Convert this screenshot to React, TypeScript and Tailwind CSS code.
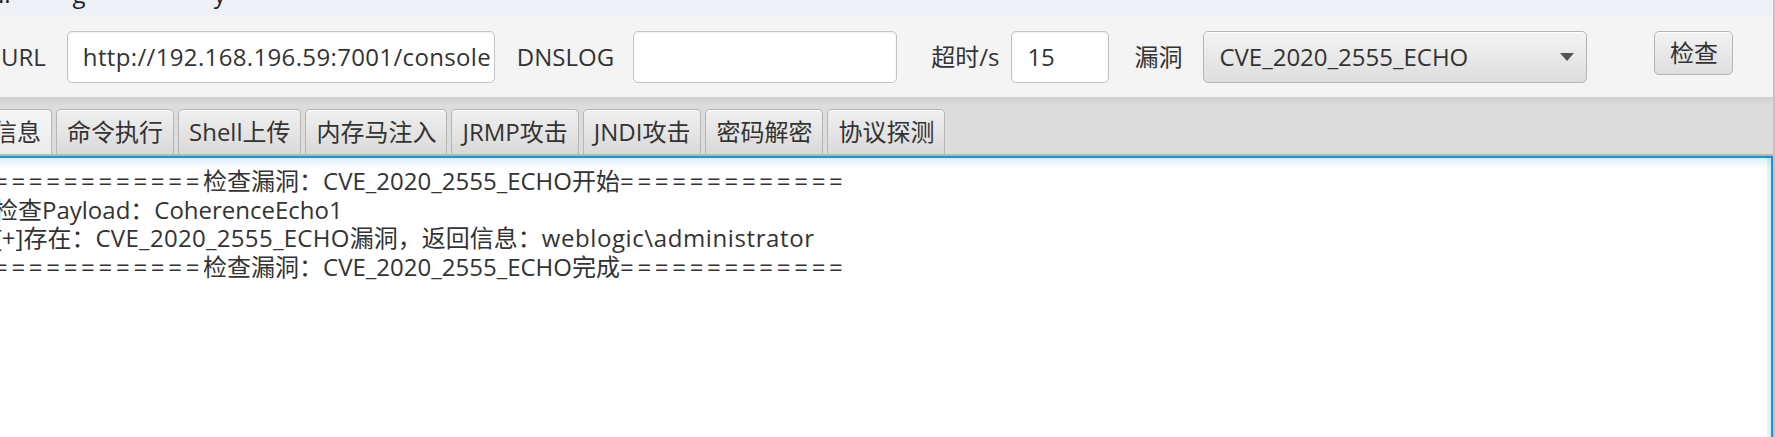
import React from "react";

const font = "font-['Open_Sans','Noto_Sans_CJK_SC',sans-serif]";

const tabs = ["基本信息", "命令执行", "Shell上传", "内存马注入", "JRMP攻击", "JNDI攻击", "密码解密", "协议探测"];

function Eq({ n }: { n: number }) {
  return <span className="tracking-[3.7px]">{"=".repeat(n)}</span>;
}

export default function App() {
  return (
    <div className={`w-[1775px] h-[437px] overflow-hidden bg-white text-[#333333] ${font}`}>
      <div className="w-[1775px] h-[437px] overflow-hidden flex flex-col border-r-2 border-[#c4c4c4]">
        {/* title strip */}
        <div className="h-[15px] shrink-0 bg-[#eef2f8] overflow-hidden">
          <div className="text-[24px] leading-[30px] -mt-[21px] whitespace-pre text-[#222]">
            <span className="ml-[-2px]">::</span>
            <span className="ml-[62px]">g</span>
            <span className="ml-[128px]">y</span>
          </div>
        </div>

        {/* toolbar */}
        <div className="h-[82px] shrink-0 bg-[#f4f4f4] flex items-start pt-[16px] text-[24px]">
          <div className="h-[52px] flex items-center pl-[1px]">URL</div>
          <div className="ml-[21px] w-[428px] h-[52px] rounded-[5px] border border-[#c3c3c3] bg-white shadow-[inset_0_1px_2px_rgba(0,0,0,0.07)] flex items-center pl-[15px] overflow-hidden whitespace-nowrap tracking-[0.35px]">
            http://192.168.196.59:7001/console
          </div>
          <div className="ml-[22px] h-[52px] flex items-center">DNSLOG</div>
          <div className="ml-[19px] w-[264px] h-[52px] rounded-[5px] border border-[#c3c3c3] bg-white shadow-[inset_0_1px_2px_rgba(0,0,0,0.07)]" />
          <div className="ml-[34px] h-[52px] flex items-center">超时/s</div>
          <div className="ml-[12px] w-[98px] h-[52px] rounded-[5px] border border-[#c3c3c3] bg-white shadow-[inset_0_1px_2px_rgba(0,0,0,0.07)] flex items-center pl-[15px]">
            15
          </div>
          <div className="ml-[25px] h-[52px] flex items-center">漏洞</div>
          <div className="ml-[21px] w-[384px] h-[52px] rounded-[5px] border border-[#b4b4b4] bg-gradient-to-b from-[#f3f3f3] to-[#dedede] shadow-[inset_0_1px_0_#ffffff] flex items-center justify-between pl-[15px] pr-[17px]">
            <span>CVE_2020_2555_ECHO</span>
            <svg width="14" height="8" viewBox="0 0 14 8" className="mr-[-5px]">
              <polygon points="0,0 14,0 7,8" fill="#555555" />
            </svg>
          </div>
          <div className="ml-[67px] w-[79px] h-[44px] rounded-[5px] border border-[#b4b4b4] bg-gradient-to-b from-[#f3f3f3] to-[#dedede] shadow-[inset_0_1px_0_#ffffff] flex items-center justify-center">
            检查
          </div>
        </div>

        {/* tab header */}
        <div className="h-[59px] shrink-0 bg-gradient-to-b from-[#cfcfcf] via-[#dcdcdc] via-[15%] to-[#dcdcdc] border-b-2 border-[#b6b6b6] pt-[12px] flex items-end gap-[4px] -ml-[66px] text-[24px]">
          {tabs.map((t, i) => (
            <div
              key={t}
              className={
                i === 0
                  ? "h-[45px] px-[10px] flex items-center rounded-t-[5px] border border-b-0 border-[#b6b6b6] bg-gradient-to-b from-[#f6f6f6] to-[#ececec] whitespace-nowrap"
                  : "h-[45px] px-[10px] flex items-center rounded-t-[5px] border border-b-0 border-[#b6b6b6] bg-gradient-to-b from-[#f0f0f0] to-[#d9d9d9] shadow-[inset_0_1px_0_#fafafa] whitespace-nowrap"
              }
            >
              {t}
            </div>
          ))}
        </div>

        {/* text area */}
        <div className="h-[400px] shrink-0 -ml-[14px] border-2 border-[#0a9dd5] bg-white shadow-[inset_0_9px_8px_-6px_rgba(3,158,211,0.22),inset_-4px_0_0_0_#e2f2f9] pt-[9px] pl-[6px] text-[24px] leading-[28.5px] whitespace-pre">
          <div>
            <Eq n={12} />检查漏洞：CVE_2020_2555_ECHO开始<Eq n={13} />
          </div>
          <div>检查Payload：CoherenceEcho1</div>
          <div>
            [+]存在：<span className="tracking-[0.3px]">CVE_2020_2555_ECHO</span>漏洞，返回信息：<span className="tracking-[0.6px]">weblogic\administrator</span>
          </div>
          <div>
            <Eq n={12} />检查漏洞：CVE_2020_2555_ECHO完成<Eq n={13} />
          </div>
        </div>
      </div>
    </div>
  );
}
